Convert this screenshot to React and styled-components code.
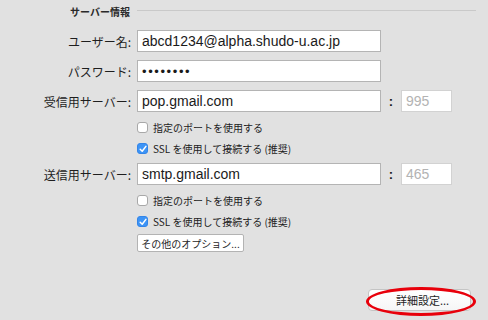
import React from 'react';
import styled, { createGlobalStyle } from 'styled-components';

const GlobalStyle = createGlobalStyle`
  html, body {
    margin: 0;
    padding: 0;
    background: #e1e1e1;
  }
  body {
    width: 488px;
    height: 320px;
    overflow: hidden;
    font-family: "Liberation Sans", "Noto Sans CJK JP", sans-serif;
    color: #1a1a1a;
  }
`;

const Panel = styled.div`
  display: flex;
  flex-direction: column;
  width: 488px;
  height: 320px;
  box-sizing: border-box;
`;

const Header = styled.div`
  display: flex;
  align-items: center;
  height: 22px;
  padding-left: 70px;
  padding-right: 12px;
  gap: 7px;
`;

const HeaderTitle = styled.span`
  font-family: "Noto Sans CJK JP", sans-serif;
  font-weight: 700;
  font-size: 10px;
  color: #2a2a2a;
`;

const HeaderLine = styled.div`
  flex: 1;
  height: 1px;
  background: #c9c9c9;
  margin-top: -1px;
`;

const Row = styled.div`
  display: grid;
  grid-template-columns: 137px 244px 20px 51px;
  align-items: center;
  height: ${(p) => p.h || 22}px;
  margin-top: ${(p) => p.mt || 0}px;
`;

const Label = styled.div`
  font-family: "Noto Sans CJK JP", sans-serif;
  font-size: 12px;
  text-align: right;
  padding-right: 6px;
  color: #1e1e1e;
  white-space: nowrap;
`;

const Field = styled.div`
  grid-column: 2;
  height: 22px;
  box-sizing: border-box;
  border: 1px solid #b4b4b4;
  background: #fff;
  display: flex;
  align-items: center;
  padding-left: 4px;
  font-size: 14px;
  color: #1a1a1a;
  white-space: nowrap;
  overflow: hidden;
`;

const Dots = styled.span`
  font-size: 13px;
  letter-spacing: 1.6px;
  margin-top: 1px;
`;

const Colon = styled.div`
  text-align: center;
  font-size: 13px;
  font-weight: 700;
`;

const Port = styled.div`
  height: 22px;
  box-sizing: border-box;
  border: 1px solid #d2d2d2;
  background: #fff;
  display: flex;
  align-items: center;
  padding-left: 4px;
  font-size: 14px;
  color: #b3b3b3;
`;

const CheckRow = styled.label`
  display: flex;
  align-items: center;
  gap: 5px;
  height: 21px;
  margin-top: ${(p) => p.mt || 0}px;
  padding-left: 137px;
  font-family: "Noto Sans CJK JP", sans-serif;
  font-size: 10px;
  color: #222;
`;

const Box = styled.span`
  width: 11px;
  height: 11px;
  box-sizing: border-box;
  border-radius: 3px;
  display: flex;
  align-items: center;
  justify-content: center;
  background: ${(p) => (p.checked ? '#3d94f6' : '#fff')};
  border: 1px solid ${(p) => (p.checked ? '#3385e8' : '#a8a8a8')};
`;

const SmallButton = styled.div`
  align-self: flex-start;
  margin-left: 137px;
  margin-top: 2px;
  height: 18px;
  width: 107px;
  box-sizing: border-box;
  border: 1px solid #b3b3b3;
  border-radius: 2px;
  background: #fff;
  display: flex;
  align-items: center;
  justify-content: center;
  font-family: "Noto Sans CJK JP", sans-serif;
  font-size: 10px;
  color: #1e1e1e;
`;

const Footer = styled.div`
  display: flex;
  justify-content: flex-end;
  padding-right: 17px;
  margin-top: 37px;
`;

const DetailWrap = styled.div`
  position: relative;
`;

const DetailButton = styled.div`
  width: 103px;
  height: 22px;
  box-sizing: border-box;
  border-radius: 4px;
  border: 1px solid #c4c4c4;
  background: linear-gradient(#ffffff, #f6f6f6);
  display: flex;
  align-items: center;
  justify-content: center;
  font-family: "Noto Sans CJK JP", sans-serif;
  font-size: 11px;
  color: #1e1e1e;
  padding-left: 6px;
`;

const Ellipse = styled.div`
  position: absolute;
  left: -2px;
  top: -2px;
  width: 110px;
  height: 29px;
  box-sizing: border-box;
  border: 3px solid #e8000b;
  border-radius: 50%;
  pointer-events: none;
`;

function Check({ checked, children, mt }) {
  return (
    <CheckRow mt={mt}>
      <Box checked={checked}>
        {checked && (
          <svg width="8" height="8" viewBox="0 0 8 8">
            <path d="M1.2 4.3 L3.2 6.2 L6.9 1.4" stroke="#fff" strokeWidth="1.5" fill="none" strokeLinecap="round" strokeLinejoin="round" />
          </svg>
        )}
      </Box>
      <span>{children}</span>
    </CheckRow>
  );
}

export default function App() {
  return (
    <>
      <GlobalStyle />
      <Panel>
        <Header>
          <HeaderTitle>サーバー情報</HeaderTitle>
          <HeaderLine />
        </Header>
        <Row mt={8}>
          <Label>ユーザー名:</Label>
          <Field>abcd1234@alpha.shudo-u.ac.jp</Field>
        </Row>
        <Row mt={8}>
          <Label>パスワード:</Label>
          <Field>
            <Dots>••••••••</Dots>
          </Field>
        </Row>
        <Row mt={8}>
          <Label>受信用サーバー:</Label>
          <Field>pop.gmail.com</Field>
          <Colon>:</Colon>
          <Port>995</Port>
        </Row>
        <Check mt={5}>指定のポートを使用する</Check>
        <Check checked>SSL を使用して接続する (推奨)</Check>
        <Row mt={4}>
          <Label>送信用サーバー:</Label>
          <Field>smtp.gmail.com</Field>
          <Colon>:</Colon>
          <Port>465</Port>
        </Row>
        <Check mt={5}>指定のポートを使用する</Check>
        <Check checked>SSL を使用して接続する (推奨)</Check>
        <SmallButton>その他のオプション...</SmallButton>
        <Footer>
          <DetailWrap>
            <DetailButton>詳細設定...</DetailButton>
            <Ellipse />
          </DetailWrap>
        </Footer>
      </Panel>
    </>
  );
}
